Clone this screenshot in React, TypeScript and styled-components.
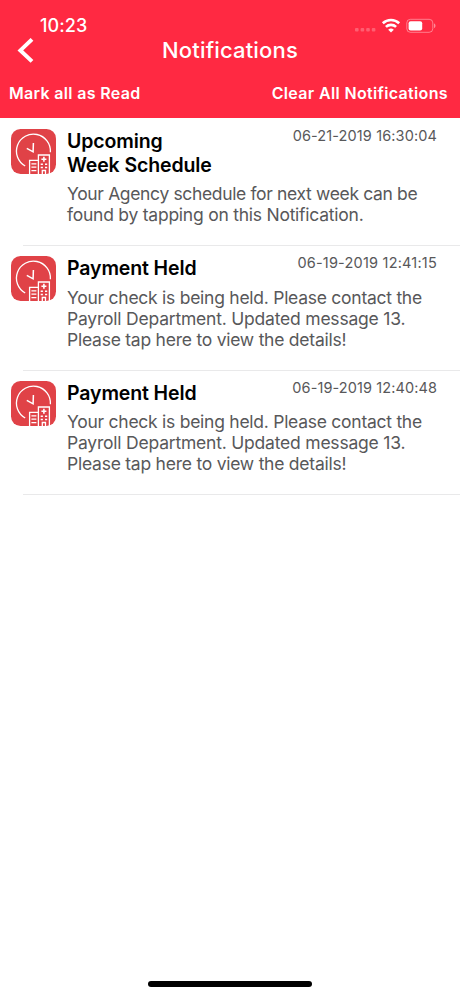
import React from 'react';
import styled, { createGlobalStyle } from 'styled-components';

const GlobalStyle = createGlobalStyle`
  *, *::before, *::after { box-sizing: border-box; }
  body { margin: 0; background: #fff; }
  button { appearance: none; border: 0; padding: 0; background: none; color: inherit; font: inherit; cursor: pointer; }
  h1, h2, p, ul { margin: 0; padding: 0; }
`;

const Screen = styled.div`
  display: flex;
  flex-direction: column;
  width: 460px;
  height: 996px;
  overflow: hidden;
  background: #fff;
  color: #000;
  font-family: Inter, "Liberation Sans", sans-serif;
`;

const Header = styled.header`
  flex: none;
  display: flex;
  flex-direction: column;
  height: 118px;
  background: #ff2942;
  color: #fff;
`;

const StatusBar = styled.div`
  display: flex;
  align-items: center;
  justify-content: space-between;
  height: 38px;
  padding: 14px 24px 0 40px;
`;

const Clock = styled.time`
  font-size: 18px;
  font-weight: 500;
  line-height: 24px;
  letter-spacing: 0.1px;
`;

const StatusIcons = styled.div`
  display: flex;
  align-items: center;
  height: 22px;
  margin-top: -2px;
`;

const NavBar = styled.div`
  display: grid;
  grid-template-columns: 60px 1fr 60px;
  align-items: center;
  height: 26px;
`;

const BackButton = styled.button`
  display: flex;
  width: 18px;
  height: 26px;
  margin-left: 17px;
`;

const Title = styled.h1`
  margin-top: -2px;
  font-size: 22px;
  font-weight: 500;
  line-height: 26px;
  text-align: center;
  letter-spacing: 0.17px;
`;

const Actions = styled.div`
  display: flex;
  align-items: center;
  justify-content: space-between;
  height: 54px;
  padding: 3px 12px 0 9px;
`;

const Action = styled.button<{ $spacing: number }>`
  font-size: 16px;
  font-weight: 600;
  line-height: 22px;
  letter-spacing: ${(p) => p.$spacing}px;
`;

const List = styled.ul`
  flex: 1;
  list-style: none;
`;

const Item = styled.li<{ $height: number; $top: number }>`
  display: grid;
  grid-template-columns: 45px 1fr;
  column-gap: 11px;
  height: ${(p) => p.$height}px;
  padding: ${(p) => p.$top}px 23px 0 11px;
  background: linear-gradient(#e9e9ea, #e9e9ea) 23px 100% / 100% 1px no-repeat;
`;

const Content = styled.div`
  display: flex;
  flex-direction: column;
  gap: 6px;
`;

const Heading = styled.div`
  display: flex;
  align-items: flex-start;
  justify-content: space-between;
`;

const Name = styled.h2`
  padding-top: 1px;
  font-size: 19.5px;
  font-weight: 600;
  line-height: 23.5px;
  letter-spacing: -0.12px;
  white-space: pre-line;
`;

const Stamp = styled.time<{ $spacing: number }>`
  margin-top: -3px;
  color: #58585a;
  font-size: 14.5px;
  line-height: 20px;
  letter-spacing: ${(p) => p.$spacing}px;
  white-space: nowrap;
`;

const Message = styled.p`
  color: #58585a;
  font-size: 17.5px;
  line-height: 21px;
`;

const Line = styled.span<{ $spacing: number }>`
  display: block;
  letter-spacing: ${(p) => p.$spacing}px;
  white-space: nowrap;
`;

const HomeArea = styled.footer`
  display: flex;
  justify-content: center;
  height: 15px;
`;

const HomeIndicator = styled.div`
  width: 164px;
  height: 6px;
  border-radius: 3px;
  background: #000;
`;

const SignalDots = () => (
  <svg width="21" height="22" viewBox="0 0 21 22" fill="#fff" fillOpacity="0.25">
    <rect x="0" y="14" width="3.6" height="3.6" rx="1" />
    <rect x="5.6" y="14" width="3.6" height="3.6" rx="1" />
    <rect x="11.2" y="14" width="3.6" height="3.6" rx="1" />
    <rect x="16.8" y="14" width="3.6" height="3.6" rx="1" />
  </svg>
);

const WifiIcon = () => (
  <svg width="30" height="22" viewBox="0 0 30 22" fill="none" stroke="#fff" strokeWidth="2.6">
    <path d="M6.8 9.3a12 12 0 0 1 16.4 0" />
    <path d="M9.9 12.9a7.4 7.4 0 0 1 10.2 0" />
    <path d="M15 18.5l-2.8-2.8a4.1 4.1 0 0 1 5.6 0z" fill="#fff" stroke="none" />
  </svg>
);

const BatteryIcon = () => (
  <svg width="30" height="22" viewBox="0 0 30 22">
    <rect x="0.8" y="5.3" width="26" height="13" rx="3.6" fill="none" stroke="#fff" strokeOpacity="0.4" />
    <rect x="2.6" y="7.2" width="13.6" height="9.2" rx="2" fill="#fff" />
    <path d="M28 9.5v4.6c.9-.3 1.5-1.2 1.5-2.3S28.9 9.8 28 9.5z" fill="#fff" fillOpacity="0.45" />
  </svg>
);

const ChevronLeft = () => (
  <svg width="18" height="26" viewBox="0 0 18 26" fill="none" stroke="#fff" strokeWidth="4">
    <path d="M15 1.4L3.4 12.4L15 23.4" />
  </svg>
);

const AgencyIcon = () => (
  <svg width="45" height="45" viewBox="0 0 45 45" fill="none" stroke="#fff" strokeWidth="1.3">
    <rect width="45" height="45" rx="9.5" fill="#e04247" stroke="none" />
    <path d="M14.2 37A17 17 0 1 1 39.4 23.2" />
    <path d="M22.4 14l-.3 8.800l-6.300-3.500" strokeWidth="1.5" />
    <path d="M18.6 45V31.400h8.400M27.400 45V26h11V45" />
    <path d="M20.400 34.800h5M20.400 38.200h5M20.400 41.600h5" />
    <path d="M32.900 27.700v5M30.400 30.200h5" strokeWidth="1.6" />
    <path d="M29.700 35.300h2.200M34 35.300h2.200M29.700 38.500h2.200M34 38.500h2.200" strokeWidth="1.5" />
    <path d="M31.300 45v-3.500h3.200V45" />
  </svg>
);

type Notification = {
  id: number;
  title: string;
  stamp: string;
  stampSpacing: number;
  lines: { text: string; spacing: number }[];
  height: number;
  top: number;
};

const heldMessage = [
  { text: 'Your check is being held. Please contact the', spacing: -0.26 },
  { text: 'Payroll Department. Updated message 13.', spacing: -0.21 },
  { text: 'Please tap here to view the details!', spacing: -0.24 },
];

const notifications: Notification[] = [
  {
    id: 1,
    title: 'Upcoming\nWeek Schedule',
    stamp: '06-21-2019 16:30:04',
    stampSpacing: 0.12,
    lines: [
      { text: 'Your Agency schedule for next week can be', spacing: -0.35 },
      { text: 'found by tapping on this Notification.', spacing: -0.24 },
    ],
    height: 128,
    top: 11,
  },
  {
    id: 2,
    title: 'Payment Held',
    stamp: '06-19-2019 12:41:15',
    stampSpacing: 0.21,
    lines: heldMessage,
    height: 124.5,
    top: 10.4,
  },
  {
    id: 3,
    title: 'Payment Held',
    stamp: '06-19-2019 12:40:48',
    stampSpacing: 0.1,
    lines: heldMessage,
    height: 124.5,
    top: 10,
  },
];

export default function App() {
  return (
    <Screen>
      <GlobalStyle />
      <Header>
        <StatusBar>
          <Clock>10:23</Clock>
          <StatusIcons>
            <SignalDots />
            <WifiIcon />
            <BatteryIcon />
          </StatusIcons>
        </StatusBar>
        <NavBar>
          <BackButton aria-label="Back">
            <ChevronLeft />
          </BackButton>
          <Title>Notifications</Title>
        </NavBar>
        <Actions>
          <Action $spacing={0.33}>Mark all as Read</Action>
          <Action $spacing={0.35}>Clear All Notifications</Action>
        </Actions>
      </Header>
      <List>
        {notifications.map((n) => (
          <Item key={n.id} $height={n.height} $top={n.top}>
            <AgencyIcon />
            <Content>
              <Heading>
                <Name>{n.title}</Name>
                <Stamp $spacing={n.stampSpacing}>{n.stamp}</Stamp>
              </Heading>
              <Message>
                {n.lines.map((line) => (
                  <Line key={line.text} $spacing={line.spacing}>
                    {line.text}
                  </Line>
                ))}
              </Message>
            </Content>
          </Item>
        ))}
      </List>
      <HomeArea>
        <HomeIndicator />
      </HomeArea>
    </Screen>
  );
}
